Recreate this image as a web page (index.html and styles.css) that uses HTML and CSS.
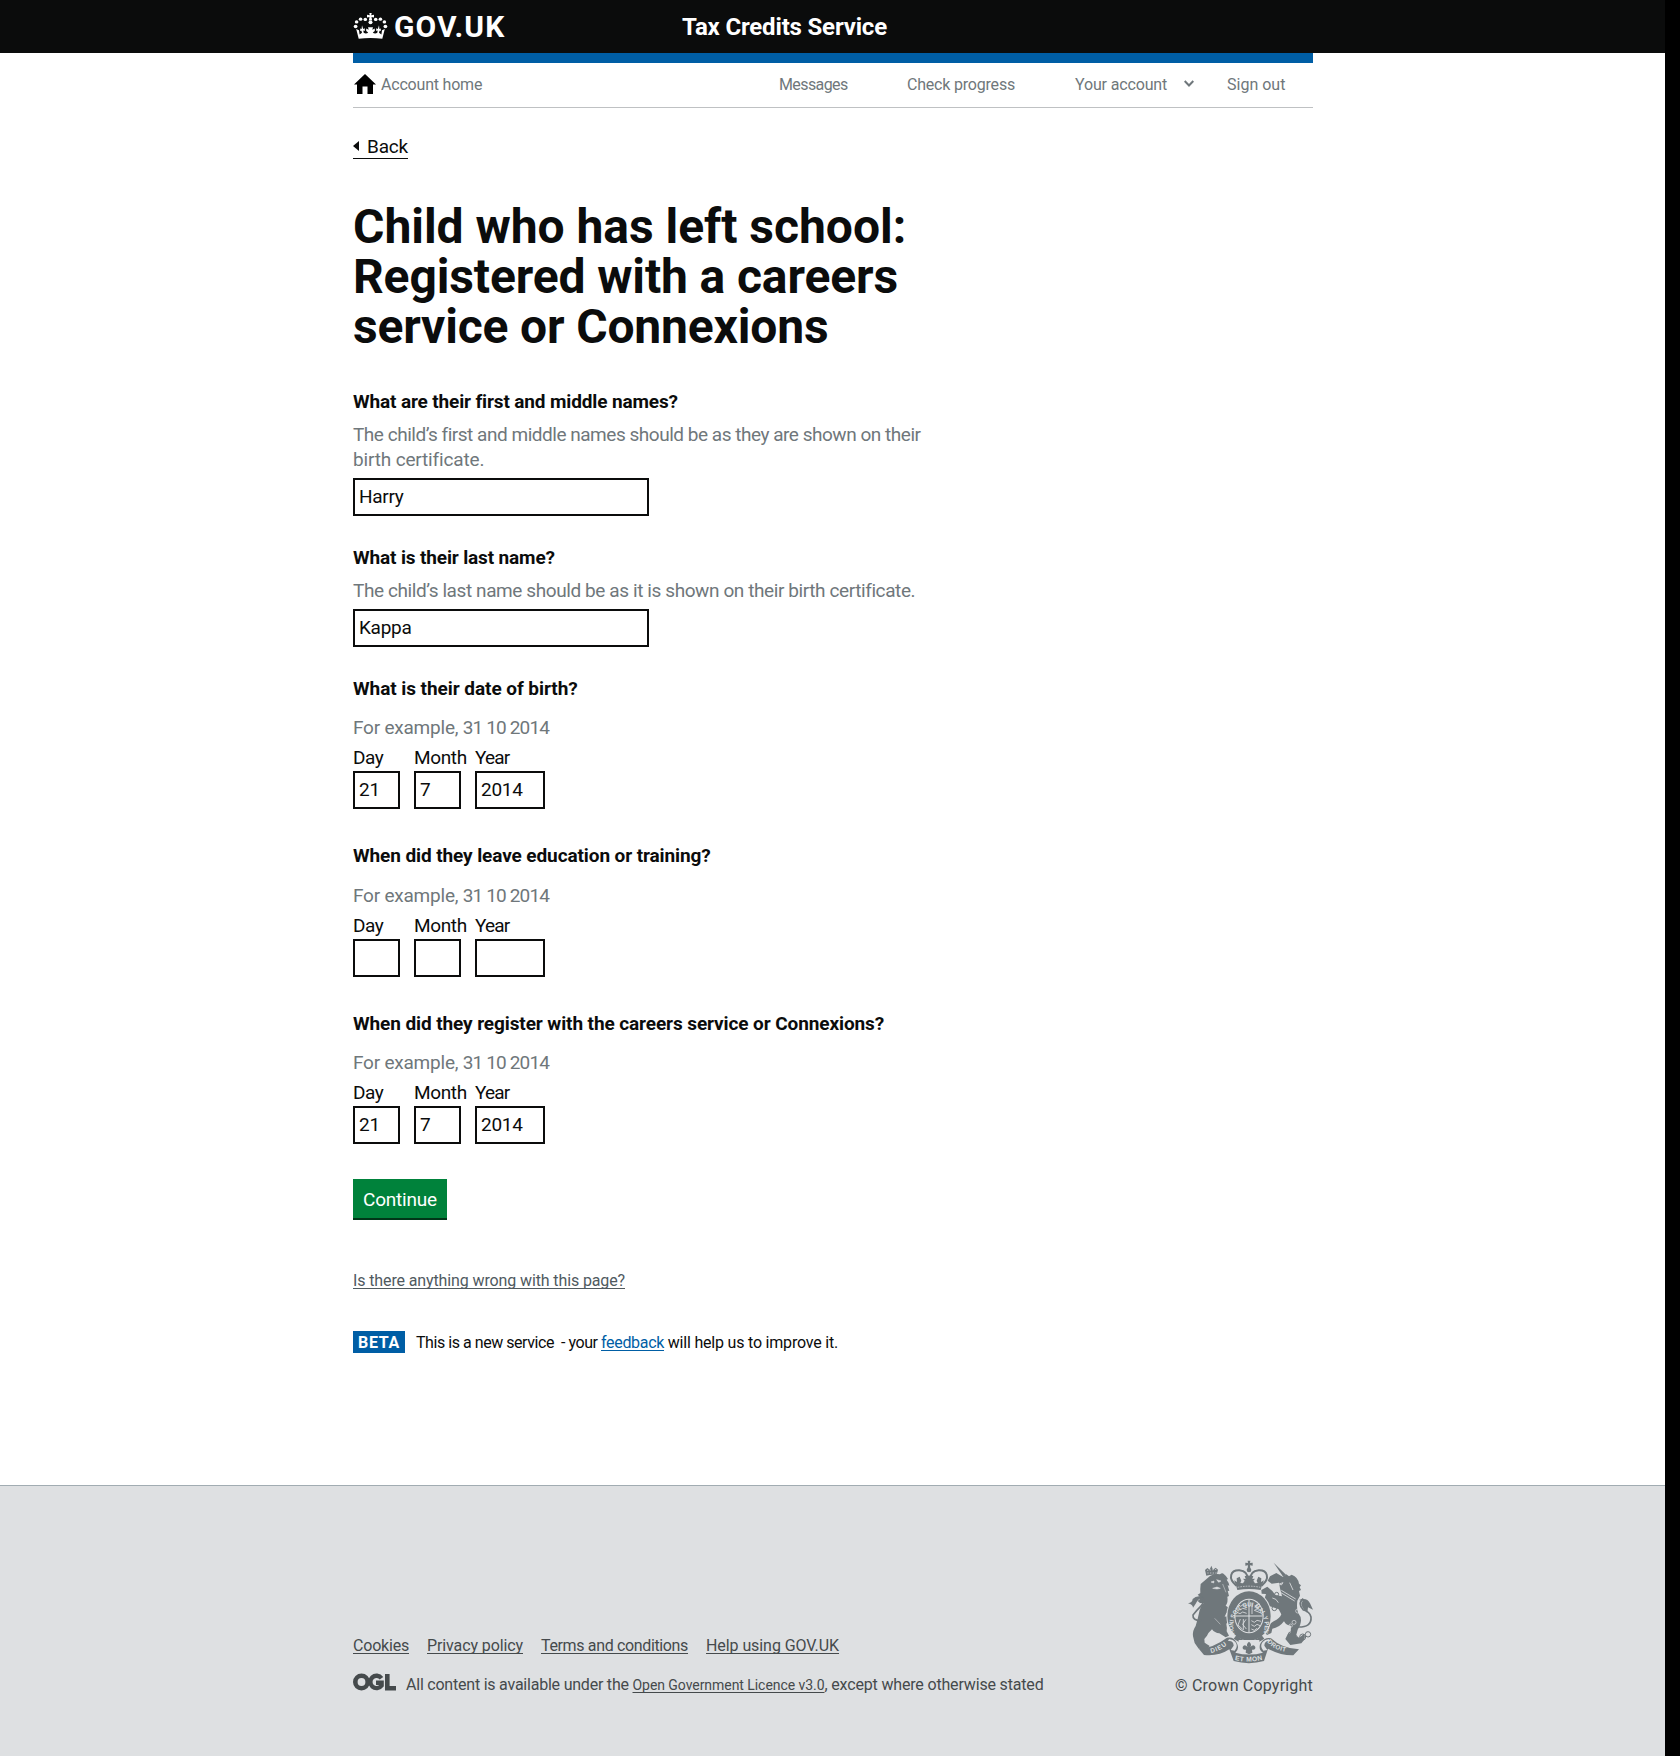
FILE: index.html
```html
<!DOCTYPE html>
<html lang="en">
<head>
<meta charset="utf-8">
<title>Tax Credits Service</title>
<link rel="stylesheet" href="styles.css">
</head>
<body>
<div class="page">
<header class="header">
  <div class="wrap header-row">
    <a class="logo" href="#">
      <svg class="crown" viewBox="0 0 35 28" preserveAspectRatio="none" fill="#fff" aria-hidden="true">
        <circle cx="2.6" cy="14.6" r="1.9"/><circle cx="3.6" cy="9.6" r="1.8"/><circle cx="7.6" cy="6.6" r="1.8"/><circle cx="12.3" cy="6.9" r="1.8"/>
        <circle cx="32.4" cy="14.6" r="1.9"/><circle cx="31.4" cy="9.6" r="1.8"/><circle cx="27.4" cy="6.6" r="1.8"/><circle cx="22.7" cy="6.9" r="1.8"/>
        <circle cx="17.5" cy="10" r="2"/>
        <path d="M16.300 0h2.400l-.5 2.400 2.800-.4v2.800l-2.500-.4.7 3.600h-3.400l.7-3.600-2.500.4V2l2.800.4z"/>
        <path d="M3.2 17.2 6 18.6 6.6 23.2 9 21.4 8.400 19 7.200 19.400V16.600l1.400.5.400-4 1.200 4 1.600-.6v2.800l-1.500-.5.400 2.600c1.600 1 3.400.8 4.500-.4l-2-1.700v-2.500l2.500 1.300-.7-2.800h5l-.7 2.800 2.500-1.300v2.500l-2 1.700c1.100 1.200 2.900 1.400 4.500.4l.4-2.600-1.500.5v-2.800l1.600.6 1.200-4 .4 4 1.400-.5v2.800L26.600 19l-.6 2.400 2.400 1.800.6-4.600 2.800-1.400-2.500 10.600C22 26.600 13 26.600 5.700 27.800z"/>
      </svg>
      <span class="t logo-text">GOV.UK</span>
    </a>
    <a class="t service" href="#">Tax Credits Service</a>
  </div>
</header>
<div class="wrap">
  <nav class="nav">
    <a class="home" href="#">
      <svg class="home-icon" viewBox="0 0 22 20" aria-hidden="true"><path d="M11 0 22 10.500H19V20H13.500V12.500H8.500V20H3V10.500H0z"/></svg>
      <span class="t n1">Account home</span>
    </a>
    <a class="t n2" href="#">Messages</a>
    <a class="t n3" href="#">Check progress</a>
    <a class="t n4" href="#">Your account</a>
    <svg class="chev" viewBox="0 0 10 7" aria-hidden="true"><path d="M.7 1L5 5.500 9.300 1" fill="none" stroke="#6f777b" stroke-width="2"/></svg>
    <a class="t n5" href="#">Sign out</a>
  </nav>
  <main class="main">
    <a class="back" href="#"><svg class="tri" viewBox="0 0 6 10" aria-hidden="true"><path d="M6 0v10L0 5z" fill="#0b0c0c"/></svg><span class="t bk">Back</span></a>
    <h1><span class="t h1a">Child who has left school:</span><br><span class="t h1b">Registered with a careers</span><br><span class="t h1c">service or Connexions</span></h1>
    <form>
      <div class="group">
        <label class="question" for="first"><span class="t q1">What are their first and middle names?</span></label>
        <p class="hint"><span class="t hi1">The child’s first and middle names should be as they are shown on their</span><br><span class="t hi2">birth certificate.</span></p>
        <input class="input wide" id="first" value="Harry">
      </div>
      <div class="group">
        <label class="question" for="last"><span class="t q2">What is their last name?</span></label>
        <p class="hint"><span class="t hi3">The child’s last name should be as it is shown on their birth certificate.</span></p>
        <input class="input wide" id="last" value="Kappa">
      </div>
      <fieldset class="group dob">
        <legend class="question"><span class="t q3">What is their date of birth?</span></legend>
        <p class="hint"><span class="t eg">For example, <span class="eg-date">31 10 2014</span></span></p>
        <div class="dates">
          <label class="date"><span class="dl-d">Day</span><input class="input" value="21"></label>
          <label class="date"><span class="dl-m">Month</span><input class="input" value="7"></label>
          <label class="date year"><span class="dl-y">Year</span><input class="input" value="2014"></label>
        </div>
      </fieldset>
      <fieldset class="group left-education">
        <legend class="question"><span class="t q4">When did they leave education or training?</span></legend>
        <p class="hint"><span class="t eg">For example, <span class="eg-date">31 10 2014</span></span></p>
        <div class="dates">
          <label class="date"><span class="dl-d">Day</span><input class="input"></label>
          <label class="date"><span class="dl-m">Month</span><input class="input"></label>
          <label class="date year"><span class="dl-y">Year</span><input class="input"></label>
        </div>
      </fieldset>
      <fieldset class="group registered">
        <legend class="question"><span class="t q5">When did they register with the careers service or Connexions?</span></legend>
        <p class="hint"><span class="t eg">For example, <span class="eg-date">31 10 2014</span></span></p>
        <div class="dates">
          <label class="date"><span class="dl-d">Day</span><input class="input" value="21"></label>
          <label class="date"><span class="dl-m">Month</span><input class="input" value="7"></label>
          <label class="date year"><span class="dl-y">Year</span><input class="input" value="2014"></label>
        </div>
      </fieldset>
      <button class="button" type="button"><span class="t btn">Continue</span></button>
    </form>
    <a class="report" href="#"><span class="t rp">Is there anything wrong with this page?</span></a>
    <div class="phase">
      <strong class="tag"><span class="t bt">BETA</span></strong>
      <p class="phase-text"><span class="t p1">This is a new service&nbsp; - your&nbsp;</span><a class="t p2" href="#">feedback</a><span class="t p3">&nbsp;will help us to improve it.</span></p>
    </div>
  </main>
</div>
<footer class="footer">
  <div class="wrap footer-row">
    <div>
      <div class="links">
        <a class="t l1" href="#">Cookies</a><a class="t l2" href="#">Privacy policy</a><a class="t l3" href="#">Terms and conditions</a><a class="t l4" href="#">Help using GOV.UK</a>
      </div>
      <div class="licence">
        <svg class="ogl" viewBox="0 0 43 18" fill="none" stroke="#454a4c" aria-label="OGL"><circle cx="8.500" cy="9" r="6.200" stroke-width="4.600"/><path d="M28.500 5.200A6.200 6.200 0 1 0 28.600 12.500V9.800H23" stroke-width="4.400"/><path d="M34.300 1V15.200H43" stroke-width="4.600"/></svg>
        <p><span class="t c1">All content is available under the&nbsp;</span><a class="t c2" href="#">Open Government Licence v3.0</a><span class="t c3">, except where otherwise stated</span></p>
      </div>
    </div>
    <div class="copyright">
      <svg class="crest" viewBox="84 60 375 312" fill="#6f777b" aria-hidden="true">
        <defs>
          <path id="garter" d="M224 281A47 58 0 1 1 310 281"/>
          <path id="dieu" d="M153 339Q182 334 208 308"/>
          <path id="mon" d="M224 360Q267 370 312 358"/>
          <path id="droit" d="M321 306Q346 333 386 336"/>
        </defs>
        <!-- royal crown -->
        <path d="M263 62h8l-1 7 8-1v9l-8-1 1 9h-8l1-9-8 1v-9l8 1z"/>
        <circle cx="267" cy="90" r="7"/>
        <g fill="none" stroke="#6f777b" stroke-width="6"><path d="M229 137C202 114 212 90 238 91 254 92 264 101 264 121M305 137C332 114 322 90 296 91 280 92 270 101 270 121"/></g>
        <path d="M228 136l-6-15 9 5-1-11 9-5 5 12-3 7 8 1 5-8-5-6 8 1-3-9 13-1 13 1-3 9 8-1-5 6 5 8 8-1-3-7 5-12 9 5-1 11 9-5-6 15-4 14q-35-6-70 0z"/>
        <path d="M233 142q34-7 68 0" fill="none" stroke="#dee0e2" stroke-width="2" stroke-dasharray="5 3"/>
        <!-- lion -->
        <path d="M139 107l-4-17 7-6 7 5 5-12 5 12 8-6 7 6-4 16q-15-3-31 2z"/>
        <path d="M141 91l30-3M142 99h29" stroke="#dee0e2" stroke-width="2" stroke-dasharray="4 4"/>
        <path d="M150 108q13-8 30-5 7-6 12 0 8 6 12 14l-4 2q7 9 8 18l-5-1 5 17-5-1 4 16-5 2q3 16-5 27l9 6 2 11-9 5-5 11 7-1 5 10-7 13q3 13 1 22l7 13-10 5-19-12q-14-1-22-12-12 11-15 19l-8 10 1 11 15 10-9 12-24-4-12-17-5-20q-2-17 8-31 7-24 10-39 3-19 14-29l-11-1-7-6 6-5-1-9-5-5 8-5q-1-11 1-27z"/>
        <path d="M153 126l9-3-1 6zM170 119l13 4-7 4zM158 145l13-4 10 4-10 2zM188 132l10 25M181 253l-17-18" fill="#dee0e2" stroke="#dee0e2" stroke-width="1.500"/>
        <path d="M124 242q-27 0-25-17 12-15 25-28 13-18 0-26" fill="none" stroke="#6f777b" stroke-width="5"/>
        <path d="M84 190q13-2 14-13 12-12 30-6-17 9-20 19l-9 13q0-9-15-13z"/>
        <!-- unicorn -->
        <path d="M341 68l37 36-8 7z"/>
        <path d="M369 111l10-8 8 6 8-5q20 8 22 27l6 5-4 6 4 8-6 3 3 14-8 15q-3 25 3 38 17 20-2 49l-5 19 10 5 14-12q8 15-8 29l-33 5-15-18 7-14 9-5 1-21q-13 1-21-13-15 20-35 22l-3 13-13 6-9-11 14-5-4-12 19-13q19-9 23-21l-8-15-31-11-12-19 5-16-13-1-1-11 18-10 15 13 9 12 20 4-6-24-3-17-22 3-12-9 7-13 19-10z"/>
        <path d="M358 132l11-4-5 7zM361 157l43 26M364 151l43 26M337 174q12 1 18 14M389 128l10 22" fill="none" stroke="#dee0e2" stroke-width="2.500"/>
        <g fill="none" stroke="#6f777b" stroke-width="3"><circle cx="350" cy="163" r="6"/><circle cx="343" cy="205" r="7"/><circle cx="392" cy="283" r="7"/><circle cx="404" cy="293" r="8"/><circle cx="428" cy="291" r="9"/><circle cx="444" cy="283" r="8"/></g>
        <path d="M411 261q45 2 42-30-4-17-23-21-19-20 0-34" fill="none" stroke="#6f777b" stroke-width="5"/>
        <path d="M416 180q25-9 34 10l9 19-15-7-2 17q-12-8-16-20-4-9 2-17z"/>
        <g fill="none" stroke="#dee0e2" stroke-width="2"><circle cx="413" cy="213" r="6"/><circle cx="402" cy="247" r="6"/><circle cx="392" cy="257" r="5"/></g>
        <!-- garter and shield -->
        <ellipse cx="267" cy="228" rx="68" ry="77" fill="#dee0e2"/>
        <ellipse cx="267" cy="228" rx="65" ry="74"/>
        <ellipse cx="267" cy="228" rx="44" ry="52" fill="#dee0e2"/>
        <ellipse cx="267" cy="228" rx="41" ry="49"/>
        <path d="M267 178v100M226 228h82" stroke="#dee0e2" stroke-width="3"/>
        <g fill="none" stroke="#dee0e2" stroke-width="2.500"><path d="M235 194l7 5 7-5 11 3M232 205l8 5 8-5 12 3M231 217l9 4 8-5 12 4M276 188v34M300 192l-16 6 11 7-12 6 20 8M274 242l9 5 8-6 12 3M274 254l9 5 8-6 9 4M274 267l9 4 8-6M241 237l-7 18 14 13M250 237v33M258 238l-10 15 11 14"/></g>
        <text class="motto ring"><textPath href="#garter" textLength="232" lengthAdjust="spacingAndGlyphs">HONI SOIT QUI MAL Y PENSE</textPath></text>
        <path d="M229 286q38 34 76 0l8 10q-46 33-92 0z"/>
        <circle cx="252" cy="305" r="3" fill="#dee0e2"/><circle cx="272" cy="306" r="3" fill="#dee0e2"/>
        <!-- scroll -->
        <path d="M117 327q44-4 84-34 20-4 29 15 10 18-4 30 41 11 83 0-17-12-7-29 12-18 31-14 33 31 84 33l-17 18q-39 1-76-20l-12 37q-45 13-91 0l-13-35q-33 22-76 17z"/>
        <path d="M204 303q17-2 17 14l-9 13 12 2q12-13 2-26-8-9-19-8zM330 303q-17-2-17 14l9 13-12 2q-12-13-2-26 8-9 19-8z" fill="#dee0e2"/>
        <path d="M236 300h62v32q-31 8-62 0z" fill="#dee0e2"/>
        <path d="M267 305q10 8 4 16 10-10 15 0 1 10-10 8l1 9-10 5-10-5 1-9q-11 2-10-8 5-10 15 0-6-8 4-16z"/>
        <text class="motto"><textPath href="#dieu" textLength="54">DIEU</textPath></text>
        <text class="motto big"><textPath href="#mon" textLength="84">ET MON</textPath></text>
        <text class="motto"><textPath href="#droit" textLength="64">DROIT</textPath></text>
      </svg>
      <a class="t cp" href="#">© Crown Copyright</a>
    </div>
  </div>
</footer>
</div>
</body>
</html>
```
FILE: styles.css
```css
* { box-sizing: border-box; }
body { margin: 0; background: #000; color: #0b0c0c; font-family: Roboto, "Liberation Sans", sans-serif; font-size: 19px; line-height: 25px; }
a { color: inherit; text-decoration: none; }
p, h1, fieldset { margin: 0; padding: 0; border: 0; min-width: 0; }
svg { display: block; flex: none; }
.t { white-space: nowrap; }

.page { width: 1665px; height: 1756px; background: #fff; display: flex; flex-direction: column; }
.wrap { width: 960px; margin: 0 auto 0 353px; }

/* Header */
.header { background: #0b0c0c; color: #fff; height: 53px; flex: none; }
.header-row { display: flex; }
.logo { display: flex; width: 329px; }
.crown { width: 35px; height: 26px; margin-top: 13px; }
.logo-text { font-size: 30px; font-weight: 700; line-height: 33px; margin: 10px 0 0 6px; letter-spacing: 1.1px; }
.service { font-size: 24px; font-weight: 700; line-height: 30px; margin-top: 12px; letter-spacing: -.177px; }

/* Account navigation */
.nav { border-top: 10px solid #005ea5; border-bottom: 1px solid #bfc1c3; height: 55px; display: flex; color: #6f777b; font-size: 16px; line-height: 20px; padding-top: 12px; }
.home { display: flex; width: 426px; }
.home-icon { width: 22px; height: 20px; margin: -1px 0 0 1px; fill: #000; }
.n1 { margin-left: 5px; letter-spacing: -.2px; }
.n2 { width: 128px; letter-spacing: -.6px; }
.n3 { width: 168px; letter-spacing: -.2px; }
.n4 { width: 109px; letter-spacing: -.15px; }
.chev { width: 10px; height: 7px; margin: 5px 33px 0 0; }

/* Page content */
.back { display: flex; width: 55px; height: 25px; margin-top: 26px; border-bottom: 1px solid #0b0c0c; line-height: 25px; }
.tri { width: 6px; height: 10px; margin: 7px 8px 0 0; }
.bk { letter-spacing: -.188px; }
h1 { font-size: 48px; line-height: 50px; font-weight: 700; margin-top: 43px; }
.h1a { letter-spacing: -.03px; }
.h1b { letter-spacing: -.126px; }
.h1c { letter-spacing: -.17px; }

.group { margin-top: 37px; }
.group + .group { margin-top: 29px; }
.group.dob + .group, .group.left-education + .group { margin-top: 34px; }
.question { display: block; padding: 0; font-weight: 700; letter-spacing: -.14px; }
.q3 { letter-spacing: -.06px; }
.q4, .q5 { letter-spacing: -.1px; }
.hint { color: #6f777b; margin: 8px 0 6px; }
.hi1 { letter-spacing: -.475px; }
.hi2 { letter-spacing: -.16px; }
.hi3 { letter-spacing: -.405px; }
.eg { letter-spacing: -.22px; }
.eg-date { letter-spacing: -.85px; }
.dob .hint, .registered .hint { margin: 14px 0 5px; }
.left-education .hint { margin: 15px 0 5px; }
.input { display: block; border: 2px solid #0b0c0c; background: #fff; font: inherit; color: #0b0c0c; width: 47px; height: 38px; padding: 3px 4px 5px; border-radius: 0; letter-spacing: -.3px; }
.wide { width: 296px; }
.dates { display: flex; gap: 14px; }
.date { width: 47px; white-space: nowrap; display: flex; flex-direction: column; gap: 1px; }
.year .input, .year { width: 70px; }
.dl-d { letter-spacing: -.4px; }
.dl-m { letter-spacing: -.35px; }
.dl-y { letter-spacing: -.8px; }
.button { display: block; width: 94px; height: 39px; margin-top: 35px; border: 0; padding: 2px 0 0; background: #00823b; color: #fff; box-shadow: 0 2px 0 #003618; font: inherit; letter-spacing: -.197px; }

.report { display: block; margin-top: 53px; color: #505a5f; font-size: 16px; line-height: 20px; letter-spacing: -.12px; }
.rp, .p2, .links a, .c2 { text-decoration: underline 1px; text-underline-offset: 2px; text-decoration-skip-ink: none; }
.phase { display: flex; margin-top: 40px; font-size: 16px; line-height: 22px; }
.tag { width: 52px; height: 22px; line-height: 23px; background: #005ea5; color: #fff; padding-left: 5px; margin-right: 11px; letter-spacing: .7px; }
.phase-text { padding-top: 1px; }
.p1 { letter-spacing: -.45px; }
.p2 { color: #005ea5; letter-spacing: -.318px; }
.p3 { letter-spacing: -.201px; }

/* Footer */
.footer { margin-top: auto; height: 271px; flex: none; background: #dee0e2; border-top: 1px solid #a1acb2; color: #454a4c; font-size: 16px; line-height: 20px; }
.footer-row { display: flex; justify-content: space-between; }
.links { display: flex; gap: 18px; margin-top: 150px; }
.l1 { letter-spacing: -.201px; }
.l2 { letter-spacing: -.107px; }
.l3 { letter-spacing: -.353px; }
.l4 { letter-spacing: -.076px; }
.licence { display: flex; margin-top: 19px; }
.ogl { width: 43px; height: 18px; margin: -2px 10px 0 0; }
.c1 { letter-spacing: -.22px; }
.c2 { font-size: 14px; letter-spacing: -.053px; }
.c3 { letter-spacing: -.169px; }
.copyright { text-align: right; padding-top: 74px; width: 139px; }
.crest { width: 125px; height: 104px; margin: 0 0 12px 14px; }
.cp { letter-spacing: .2px; }
.motto { font-family: "Liberation Sans", sans-serif; font-weight: 700; font-size: 19px; fill: #dee0e2; }
.ring { font-size: 19px; }
.big { font-size: 20px; }
```
